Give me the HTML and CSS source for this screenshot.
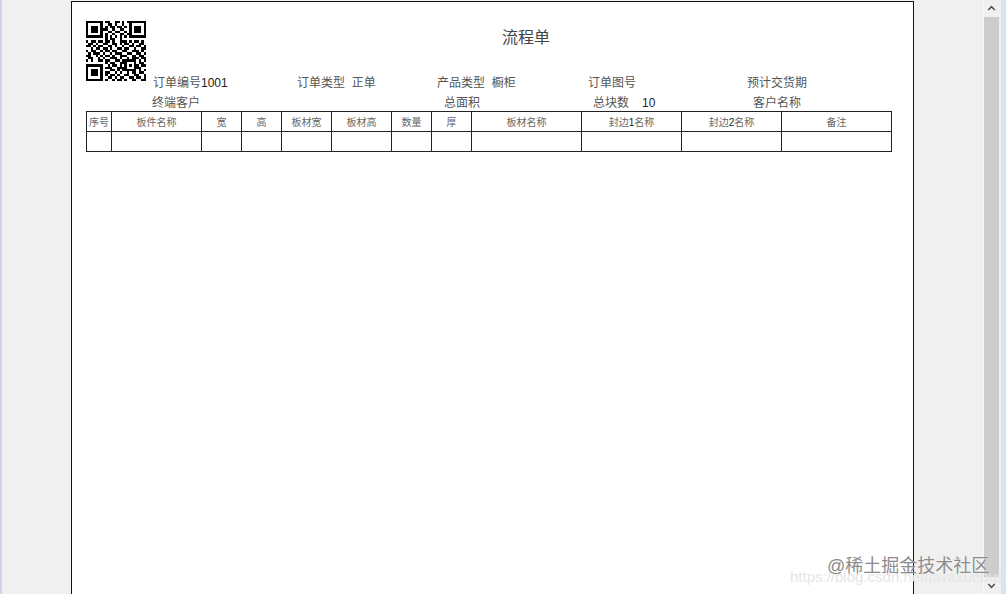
FILE: index.html
```html
<!DOCTYPE html>
<html lang="zh-CN">
<head>
  <meta charset="UTF-8" />
  <title>流程单</title>
  <link rel="stylesheet" href="styles.css">
</head>
<body>
  <div class="preview">
    <div class="sheet">
      <div class="head">
        <div class="qr-col">
          <svg id="qr" class="qr" viewBox="0 0 25 25" shape-rendering="crispEdges"></svg>
        </div>
        <div class="info">
          <h1 class="title">流程单</h1>
          <div class="info-row first">
            <span class="w144">订单编号<b>1001</b></span>
            <span class="w140">订单类型&nbsp; 正单</span>
            <span class="w151">产品类型&nbsp; 橱柜</span>
            <span class="w159">订单图号</span>
            <span>预计交货期</span>
          </div>
          <div class="info-row second">
            <span class="w292">终端客户</span>
            <span class="w149">总面积</span>
            <span class="w160">总块数<b class="count">10</b></span>
            <span>客户名称</span>
          </div>
        </div>
      </div>
      <table class="grid">
        <colgroup>
          <col style="width:25px"><col style="width:90px"><col style="width:40px"><col style="width:40px">
          <col style="width:50px"><col style="width:60px"><col style="width:40px"><col style="width:40px">
          <col style="width:110px"><col style="width:100px"><col style="width:100px"><col style="width:110px">
        </colgroup>
        <tr>
          <th>序号</th><th>板件名称</th><th>宽</th><th>高</th><th>板材宽</th><th>板材高</th>
          <th>数量</th><th>厚</th><th>板材名称</th><th>封边<b>1</b>名称</th><th>封边<b>2</b>名称</th><th>备注</th>
        </tr>
        <tr>
          <td></td><td></td><td></td><td></td><td></td><td></td><td></td><td></td><td></td><td></td><td></td><td></td>
        </tr>
      </table>
    </div>
  </div>

  <div class="scrollbar">
    <svg class="arrow" viewBox="0 0 16 17"><path d="M4.5 10 8 6.5 11.5 10" fill="none" stroke="#505050" stroke-width="1.6"/></svg>
    <div class="thumb"></div>
    <svg class="arrow" viewBox="0 0 16 17"><path d="M4.5 7 8 10.5 11.5 7" fill="none" stroke="#505050" stroke-width="1.6"/></svg>
  </div>

  <div class="mark-url">https://blog.csdn.net/javaxuebus</div>
  <div class="mark">@稀土掘金技术社区</div>

  <script>
    // 二维码
    var rows = [
      "1111111011001101011111111",
      "1000001001101001001000001",
      "1011101010110110101011101",
      "1011101110010011001011101",
      "1011101001101100101011101",
      "1000001010010011011000001",
      "1111111010101010101111111",
      "0000000010110010000000000",
      "1011011011010011101011010",
      "0110100110011010110100110",
      "1101011001101001001101101",
      "0010110110100110110010011",
      "1011001011011001100111010",
      "0101110100101110011001101",
      "1100101011010011100110110",
      "0110010100111010010111011",
      "1010011011001101111110101",
      "0000000010110011100010110",
      "1111111001011010101011011",
      "1000001011100111100011100",
      "1011101000110101111110101",
      "1011101011001010010110110",
      "1011101010110100110011001",
      "1000001001101011001101101",
      "1111111010010110100110011"
    ];
    var out = "";
    rows.forEach(function (row, y) {
      for (var x = 0; x < row.length; x++) {
        if (row[x] === "1") out += '<rect x="' + x + '" y="' + y + '" width="1" height="1"/>';
      }
    });
    document.getElementById("qr").innerHTML = out;
  </script>
</body>
</html>
```

FILE: styles.css
```css
html, body {
  margin: 0;
  height: 594px;
  overflow: hidden;
}
body {
  position: relative;
  display: flex;
  background: #f0f0f0;
  border-left: 2px solid #ccd5e6;
  border-right: 5px solid #dbe5f1;
  box-sizing: border-box;
  font-family: "Liberation Sans", "Noto Sans CJK SC", sans-serif;
  color: #555;
}
.preview {
  flex: 1;
  padding: 1px 0 0 69px;
  overflow: hidden;
}
.sheet {
  width: 841px;
  height: 640px;
  background: white;
  border: 1px solid #111;
}
.head {
  display: flex;
  height: 109px;
}
.qr-col {
  padding: 19px 0 0 14px;
  margin-right: 7px;
}
.qr {
  display: block;
  width: 60px;
  height: 60px;
  fill: black;
}
.info {
  flex: 1;
}
.title {
  margin: 24px 0 0 349px;
  height: 24px;
  font-size: 16px;
  line-height: 24px;
  font-weight: normal;
  color: #444;
}
.info-row {
  display: flex;
  font-size: 12px;
  line-height: 16px;
  white-space: nowrap;
}
.info-row b, .grid b {
  font-weight: normal;
  color: #222;
}
.first {
  margin-top: 25px;
}
.second {
  margin-top: 4px;
  margin-left: -1px;
}
.count {
  margin-left: 13px;
}
.w144 { width: 144px; }
.w140 { width: 140px; }
.w151 { width: 151px; }
.w159 { width: 159px; }
.w292 { width: 292px; }
.w149 { width: 149px; }
.w160 { width: 160px; }
.grid {
  margin-left: 14px;
  width: 806px;
  table-layout: fixed;
  border-collapse: collapse;
  font-size: 10px;
  color: #666;
}
.grid th, .grid td {
  height: 19px;
  padding: 0;
  border: 1px solid #222;
  font-weight: normal;
  text-align: center;
}
.scrollbar {
  width: 15px;
  margin-right: 2px;
  display: flex;
  flex-direction: column;
  border-left: 1px solid #f7f7f7;
}
.arrow {
  display: block;
  width: 15px;
  height: 17px;
}
.thumb {
  flex: 1;
  background: #cdcdcd;
}
.mark {
  position: absolute;
  left: 825px;
  top: 554px;
  font-size: 18px;
  line-height: 24px;
  color: #8c8c8c;
  text-shadow: 0 0 1px white;
  white-space: nowrap;
}
.mark-url {
  position: absolute;
  left: 788px;
  top: 568px;
  font-size: 15px;
  line-height: 18px;
  color: #e6e6e6;
  white-space: nowrap;
}
```
